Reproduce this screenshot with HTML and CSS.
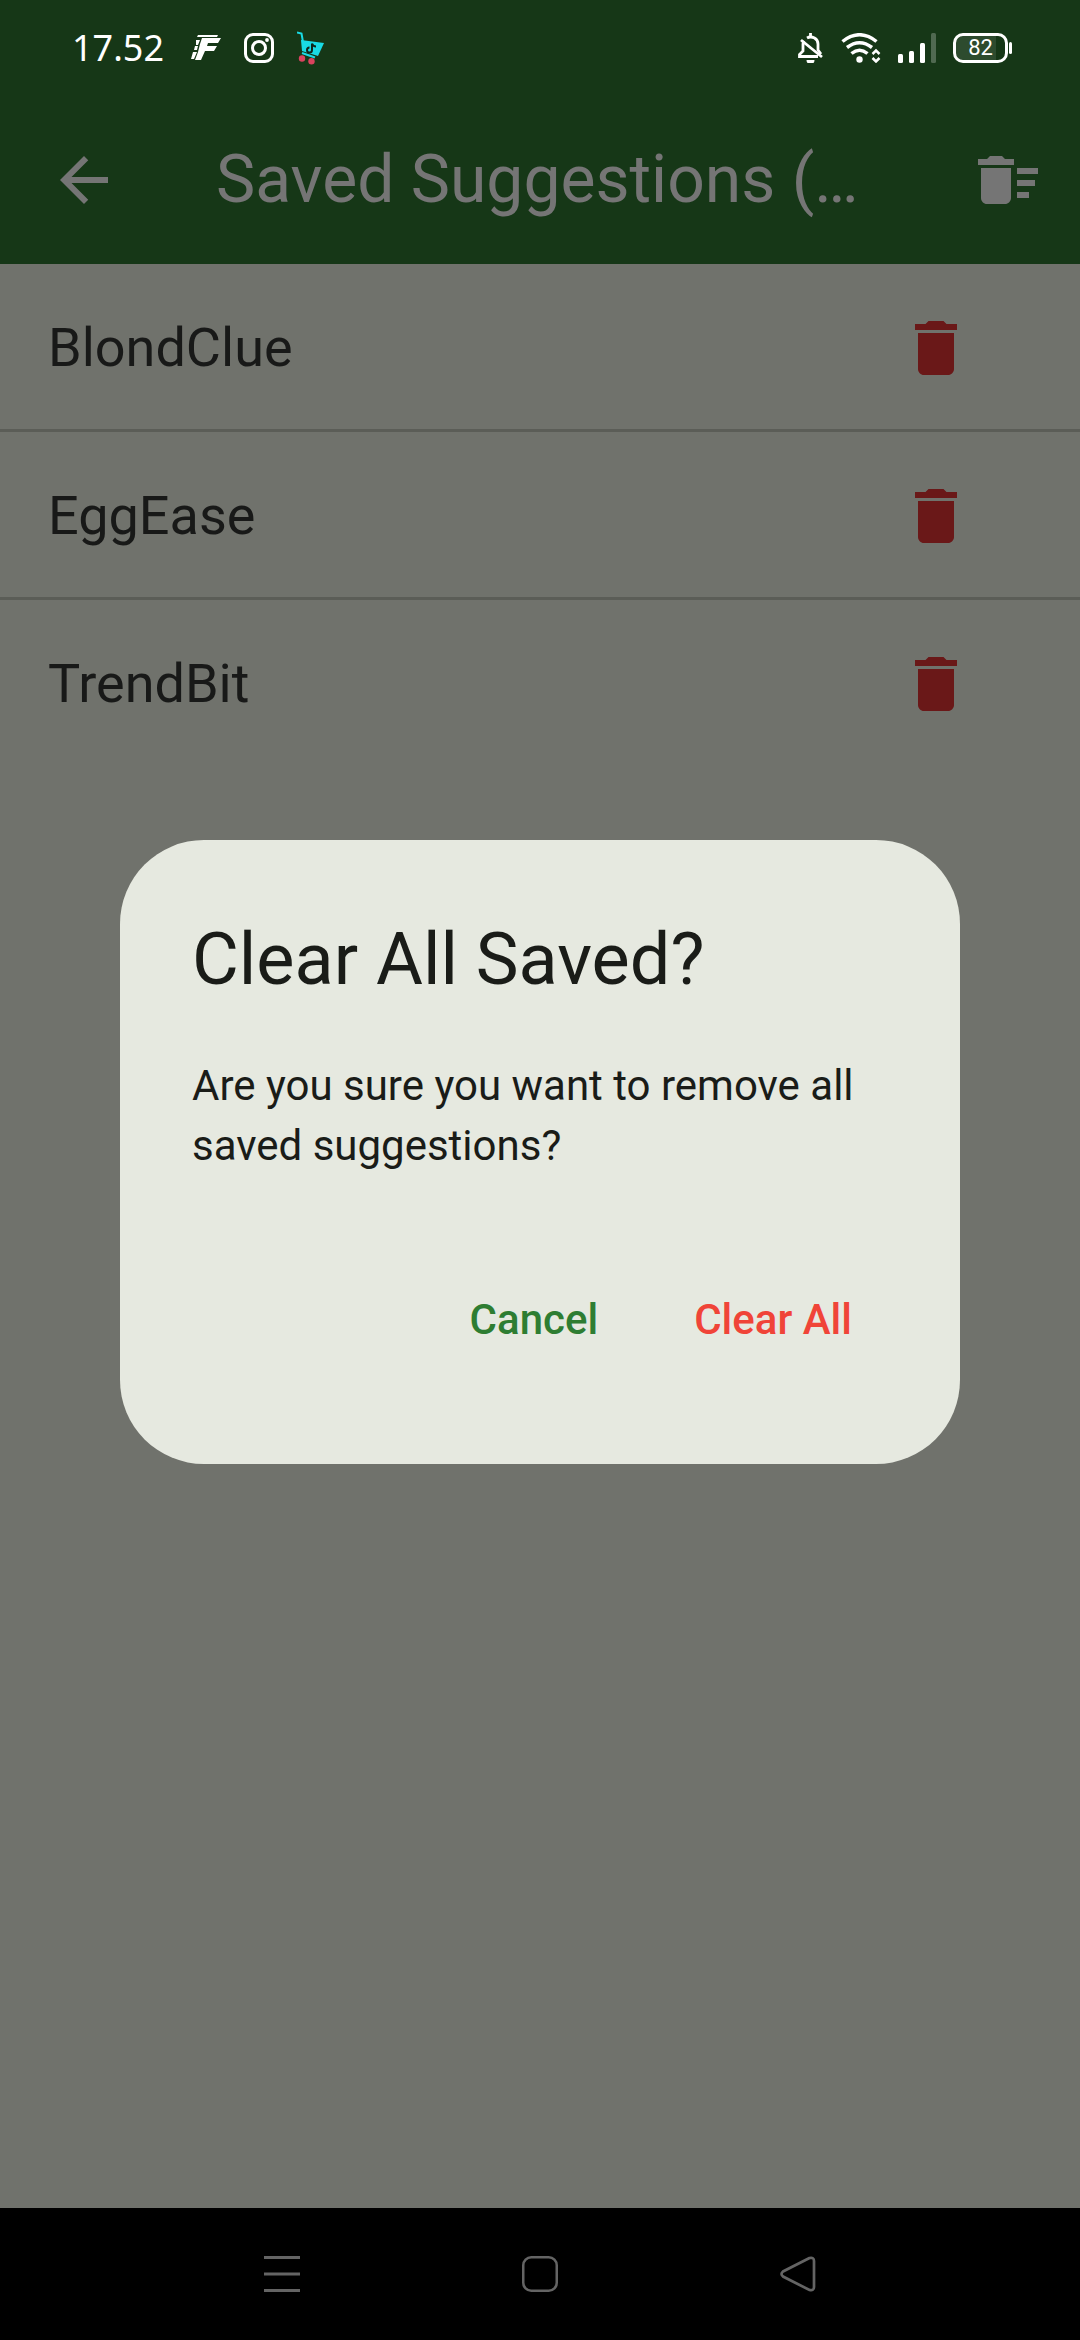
FILE: index.html
```html
<!DOCTYPE html>
<html lang="en">
<head>
<meta charset="utf-8">
<meta name="viewport" content="width=device-width, initial-scale=1">
<title>Saved Suggestions</title>
<link rel="stylesheet" href="styles.css">
</head>
<body>
<div class="screen">
  <div class="status-bar">
    <div class="status-left">
      <span class="clock">17.52</span>
      <svg class="status-icon" width="30" height="30" viewBox="0 0 30 30" fill="#fff">
        <path d="M7 2H27L26 4H6z"/>
        <path d="M11 5H30L27 10H17L16 13H26L23 18H14L10 27H4L7 19L9 11z"/>
        <path d="M5 7H9L7 12H5zM4 13H7L6 17H3zM2 19H6L3 26H0z"/>
      </svg>
      <svg class="status-icon" width="30" height="30" viewBox="0 0 30 30" fill="none" stroke="#fff" stroke-width="3">
        <rect x="1.5" y="1.5" width="27" height="27" rx="7.5"/>
        <circle cx="15" cy="15" r="6.5"/>
        <circle cx="23" cy="7" r="1.9" fill="#fff" stroke="none"/>
      </svg>
      <svg class="status-icon" width="30" height="34" viewBox="0 0 30 34">
        <path d="M0 1.500L4.500 2.500L6 11" fill="none" stroke="#19dbe5" stroke-width="2"/>
        <path d="M4 9L27 12L21 25L5 20z" fill="#19dbe5"/>
        <path d="M5 22L18 26.500" stroke="#19dbe5" stroke-width="2"/>
        <path d="M15 12.500V19a2.500 2.500 0 1 1-2.500-2.500M15 12.500q1 3 4 3" fill="none" stroke="#10251a" stroke-width="2"/>
        <circle cx="5" cy="27.500" r="3.200" fill="#d9435e"/>
        <circle cx="14.500" cy="30.300" r="3.200" fill="#d9435e"/>
      </svg>
    </div>
    <div class="status-right">
      <svg width="26" height="30" viewBox="0 0 26 30" fill="none" stroke="#fff" stroke-width="2.800">
        <path d="M9 5Q12.500 3 16.500 5Q20 7 20 11V17L23 21M20 23.500H1.500V21.500L5 18V11Q5 9.500 6 8"/>
        <path d="M12.500 0V4M3 7L24 24"/>
        <path d="M8.500 27H16.500A4 4 0 0 1 8.500 27z" fill="#fff" stroke="none"/>
      </svg>
      <svg width="40" height="30" viewBox="0 0 40 30" fill="none" stroke="#fff" stroke-width="3.500">
        <path d="M1.500 8.500Q18.500-5 35.500 8.500M6 14.500Q18.500 5 31 14.500M10.500 20.500Q18.500 14 26.500 20.500"/>
        <circle cx="18.500" cy="26.500" r="3.200" fill="#fff" stroke="none"/>
        <path d="M31.500 21L35 17.500L38.500 21M31.500 25L35 28.500L38.500 25" stroke-width="2.500"/>
      </svg>
      <svg width="38" height="30" viewBox="0 0 38 30" fill="#fff">
        <rect x="0" y="21" width="5" height="9" rx="1.500"/>
        <rect x="11" y="18" width="5" height="12" rx="1.500"/>
        <rect x="22" y="10" width="5" height="20" rx="1.500"/>
        <rect x="33" y="0" width="5" height="30" rx="1.500" opacity=".25"/>
      </svg>
      <div class="battery"><span class="battery-level">82</span></div>
    </div>
  </div>

  <header class="app-bar">
    <button class="icon-button back" type="button" aria-label="Back">
      <svg class="icon" viewBox="0 0 24 24"><path d="M20 11H7.830l5.590-5.590L12 4l-8 8 8 8 1.410-1.410L7.830 13H20z"/></svg>
    </button>
    <h1 class="app-title">Saved Suggestions (…</h1>
    <button class="icon-button" type="button" aria-label="Clear all saved">
      <svg class="icon" viewBox="0 0 24 24"><path d="M15 16h4v2h-4zm0-8h7v2h-7zm0 4h6v2h-6zM3 18c0 1.100.9 2 2 2h6c1.100 0 2-.9 2-2V8H3v10zM14 5h-3l-1-1H6L5 5H2v2h12z"/></svg>
    </button>
  </header>

  <main class="content">
    <ul class="list">
      <li class="row">
        <span class="row-title">BlondClue</span>
        <button class="icon-button delete" type="button" aria-label="Delete BlondClue">
          <svg class="icon" viewBox="0 0 24 24"><path d="M6 19c0 1.100.9 2 2 2h8c1.100 0 2-.9 2-2V7H6v12zM19 4h-3.500l-1-1h-5l-1 1H5v2h14V4z"/></svg>
        </button>
      </li>
      <li class="row">
        <span class="row-title">EggEase</span>
        <button class="icon-button delete" type="button" aria-label="Delete EggEase">
          <svg class="icon" viewBox="0 0 24 24"><path d="M6 19c0 1.100.9 2 2 2h8c1.100 0 2-.9 2-2V7H6v12zM19 4h-3.500l-1-1h-5l-1 1H5v2h14V4z"/></svg>
        </button>
      </li>
      <li class="row">
        <span class="row-title">TrendBit</span>
        <button class="icon-button delete" type="button" aria-label="Delete TrendBit">
          <svg class="icon" viewBox="0 0 24 24"><path d="M6 19c0 1.100.9 2 2 2h8c1.100 0 2-.9 2-2V7H6v12zM19 4h-3.500l-1-1h-5l-1 1H5v2h14V4z"/></svg>
        </button>
      </li>
    </ul>
  </main>

  <nav class="nav-bar" aria-label="System">
    <button class="nav-button" type="button" aria-label="Recent apps">
      <svg width="36" height="36" viewBox="0 0 36 36" stroke="#646464" stroke-width="3"><path d="M0 1.500H36M0 18H36M0 34.500H36"/></svg>
    </button>
    <button class="nav-button" type="button" aria-label="Home">
      <svg width="36" height="36" viewBox="0 0 36 36" fill="none" stroke="#646464" stroke-width="2.500"><rect x="1.250" y="1.250" width="33.500" height="33.500" rx="8"/></svg>
    </button>
    <button class="nav-button" type="button" aria-label="Back">
      <svg width="36" height="36" viewBox="0 0 36 36" fill="none" stroke="#646464" stroke-width="2.700"><path d="M29.500 2L3 15.500Q0 18 3 20.500L29.500 34Q34 35 34 31V5Q34 1 29.500 2z"/></svg>
    </button>
  </nav>
</div>

<div class="overlay">
  <section class="dialog" role="alertdialog" aria-modal="true" aria-labelledby="dialog-title" aria-describedby="dialog-text">
    <h2 class="dialog-title" id="dialog-title">Clear All Saved?</h2>
    <p class="dialog-text" id="dialog-text">Are you sure you want to remove all saved suggestions?</p>
    <div class="dialog-actions">
      <button class="text-button" type="button">Cancel</button>
      <button class="text-button danger" type="button">Clear All</button>
    </div>
  </section>
</div>
</body>
</html>
```
FILE: styles.css
```css
* {
  box-sizing: border-box;
}

body {
  margin: 0;
  font-family: Roboto, "Liberation Sans", sans-serif;
  background: #70726c;
}

h1, h2, p, ul {
  margin: 0;
  padding: 0;
  font-weight: 400;
}

button {
  border: 0;
  padding: 0;
  background: none;
  font: inherit;
  color: inherit;
}

svg {
  display: block;
  flex: none;
}

.screen {
  display: flex;
  flex-direction: column;
  min-height: 100vh;
}

/* Status bar */
.status-bar {
  display: flex;
  justify-content: space-between;
  align-items: center;
  height: 96px;
  padding: 0 72px;
  background: #163717;
  color: #fff;
}

.status-left {
  display: flex;
  align-items: center;
  gap: 23px;
}

.clock {
  width: 96px;
  font: 36px/48px "Noto Sans", sans-serif;
}

.status-right {
  display: flex;
  align-items: center;
  gap: 17px;
}

.battery {
  position: relative;
  display: flex;
  align-items: center;
  justify-content: center;
  width: 55px;
  height: 30px;
  border: 3px solid #fff;
  border-radius: 10px;
  font-size: 22px;
  line-height: 24px;
  background: linear-gradient(to right, #2d4b2e 82%, #163717 82%);
}

.battery::after {
  content: "";
  position: absolute;
  top: 6px;
  right: -7px;
  width: 3px;
  height: 12px;
  border-radius: 2px;
  background: #fff;
}

/* App bar */
.app-bar {
  display: flex;
  align-items: center;
  height: 168px;
  background: #163717;
  color: #757575;
}

.icon-button {
  display: flex;
  flex: none;
  align-items: center;
  justify-content: center;
  width: 144px;
  height: 144px;
}

.icon-button.back {
  width: 168px;
}

.icon {
  width: 72px;
  height: 72px;
  fill: currentColor;
}

.app-title {
  flex: 1;
  padding: 0 48px;
  font-size: 66px;
  line-height: 84px;
  white-space: nowrap;
}

/* Saved names */
.content {
  flex: 1;
}

.list {
  list-style: none;
}

.row {
  display: flex;
  align-items: center;
  height: 168px;
  padding: 0 72px 0 48px;
  color: #181918;
}

.row:not(:last-child) {
  box-shadow: inset 0 -3px #5b5d57;
}

.row-title {
  flex: 1;
  font-size: 54px;
  line-height: 72px;
}

.delete {
  color: #6a1818;
}

/* System navigation */
.nav-bar {
  display: flex;
  justify-content: center;
  height: 132px;
  background: #000;
}

.nav-button {
  display: flex;
  align-items: center;
  justify-content: center;
  width: 258px;
}

/* Dialog */
.overlay {
  position: fixed;
  inset: 0;
  display: flex;
  align-items: center;
  justify-content: center;
  padding: 96px 120px 132px;
}

.dialog {
  width: 100%;
  padding: 72px;
  border-radius: 84px;
  background: #e6e9e0;
  color: #1a1c18;
}

.dialog-title {
  font-size: 72px;
  line-height: 96px;
}

.dialog-text {
  margin-top: 48px;
  font-size: 42px;
  line-height: 60px;
}

.dialog-actions {
  display: flex;
  justify-content: flex-end;
  gap: 24px;
  margin-top: 72px;
}

.text-button {
  height: 144px;
  padding: 0 36px;
  font-size: 42px;
  font-weight: 500;
  line-height: 60px;
  color: #2e7d32;
}

.text-button.danger {
  color: #f04438;
}
```
